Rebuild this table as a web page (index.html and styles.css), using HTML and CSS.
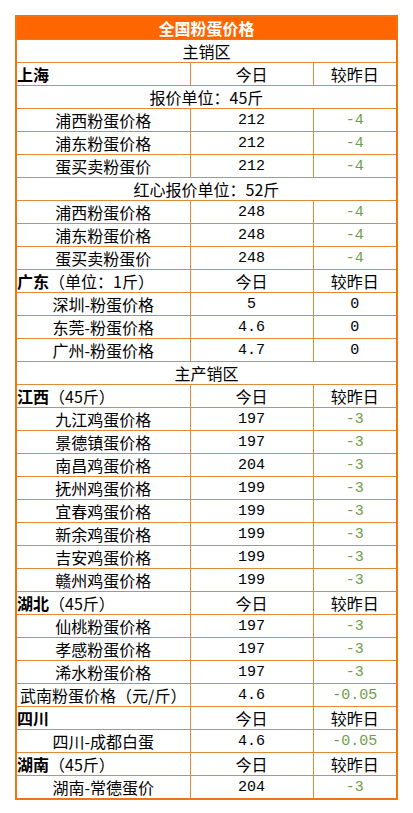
FILE: index.html
```html
<!DOCTYPE html>
<html lang="zh-CN">
<head>
<meta charset="utf-8">
<title>全国粉蛋价格</title>
<link rel="stylesheet" href="styles.css">
</head>
<body>
<table class="price">
  <colgroup><col class="c1"><col class="c2"><col class="c3"></colgroup>
  <tr><td colspan="3" class="title">全国粉蛋价格</td></tr>
  <tr><td colspan="3" class="ctr">主销区</td></tr>
  <tr><td class="region"><b>上海</b></td><td class="ctr">今日</td><td class="ctr">较昨日</td></tr>
  <tr><td colspan="3" class="ctr">报价单位：45斤</td></tr>
  <tr><td class="ctr">浦西粉蛋价格</td><td class="num">212</td><td class="chg">-4</td></tr>
  <tr><td class="ctr">浦东粉蛋价格</td><td class="num">212</td><td class="chg">-4</td></tr>
  <tr><td class="ctr">蛋买卖粉蛋价</td><td class="num">212</td><td class="chg">-4</td></tr>
  <tr><td colspan="3" class="ctr">红心报价单位：52斤</td></tr>
  <tr><td class="ctr">浦西粉蛋价格</td><td class="num">248</td><td class="chg">-4</td></tr>
  <tr><td class="ctr">浦东粉蛋价格</td><td class="num">248</td><td class="chg">-4</td></tr>
  <tr><td class="ctr">蛋买卖粉蛋价</td><td class="num">248</td><td class="chg">-4</td></tr>
  <tr><td class="region"><b>广东</b>（单位：1斤）</td><td class="ctr">今日</td><td class="ctr">较昨日</td></tr>
  <tr><td class="ctr">深圳-粉蛋价格</td><td class="num">5</td><td class="num">0</td></tr>
  <tr><td class="ctr">东莞-粉蛋价格</td><td class="num">4.6</td><td class="num">0</td></tr>
  <tr><td class="ctr">广州-粉蛋价格</td><td class="num">4.7</td><td class="num">0</td></tr>
  <tr><td colspan="3" class="ctr">主产销区</td></tr>
  <tr><td class="region"><b>江西</b>（45斤）</td><td class="ctr">今日</td><td class="ctr">较昨日</td></tr>
  <tr><td class="ctr">九江鸡蛋价格</td><td class="num">197</td><td class="chg">-3</td></tr>
  <tr><td class="ctr">景德镇蛋价格</td><td class="num">197</td><td class="chg">-3</td></tr>
  <tr><td class="ctr">南昌鸡蛋价格</td><td class="num">204</td><td class="chg">-3</td></tr>
  <tr><td class="ctr">抚州鸡蛋价格</td><td class="num">199</td><td class="chg">-3</td></tr>
  <tr><td class="ctr">宜春鸡蛋价格</td><td class="num">199</td><td class="chg">-3</td></tr>
  <tr><td class="ctr">新余鸡蛋价格</td><td class="num">199</td><td class="chg">-3</td></tr>
  <tr><td class="ctr">吉安鸡蛋价格</td><td class="num">199</td><td class="chg">-3</td></tr>
  <tr><td class="ctr">赣州鸡蛋价格</td><td class="num">199</td><td class="chg">-3</td></tr>
  <tr><td class="region"><b>湖北</b>（45斤）</td><td class="ctr">今日</td><td class="ctr">较昨日</td></tr>
  <tr><td class="ctr">仙桃粉蛋价格</td><td class="num">197</td><td class="chg">-3</td></tr>
  <tr><td class="ctr">孝感粉蛋价格</td><td class="num">197</td><td class="chg">-3</td></tr>
  <tr><td class="ctr">浠水粉蛋价格</td><td class="num">197</td><td class="chg">-3</td></tr>
  <tr><td class="ctr">武南粉蛋价格（元/斤）</td><td class="num">4.6</td><td class="chg">-0.05</td></tr>
  <tr><td class="region"><b>四川</b></td><td class="ctr">今日</td><td class="ctr">较昨日</td></tr>
  <tr><td class="ctr">四川-成都白蛋</td><td class="num">4.6</td><td class="chg">-0.05</td></tr>
  <tr><td class="region"><b>湖南</b>（45斤）</td><td class="ctr">今日</td><td class="ctr">较昨日</td></tr>
  <tr><td class="ctr">湖南-常德蛋价</td><td class="num">204</td><td class="chg">-3</td></tr>
</table>
</body>
</html>
```
FILE: styles.css
```css
html, body {
  margin: 0;
  padding: 0;
  background: #ffffff;
}
body {
  padding: 15px 0 0 15px;
  font-family: "Noto Sans CJK SC", "Noto Sans", sans-serif;
  font-size: 16px;
  color: #000000;
}
.price {
  border-collapse: collapse;
  border: 2px solid #f07414;
  table-layout: fixed;
  width: 382px;
}
.c1 { width: 174px; }
.c2 { width: 123px; }
.c3 { width: 84px; }
.price td {
  border: 1px solid #e08a3a;
  height: 22px;
  padding: 0;
  line-height: 22px;
  white-space: nowrap;
  overflow: visible;
}
.price td.title {
  background: #ff6600;
  color: #ffffff;
  font-weight: bold;
  text-align: center;
  border-color: #f07414;
}
.ctr { text-align: center; }
.price td.num,
.price td.chg {
  text-align: center;
  font-family: "Liberation Mono", "DejaVu Sans Mono", monospace;
  font-size: 15px;
  height: 20px;
  line-height: 20px;
  padding-top: 2px;
}
.price td.chg { color: #6f9e4a; }
.region { text-align: left; padding-left: 1px; }
.region b { font-weight: bold; }
```
